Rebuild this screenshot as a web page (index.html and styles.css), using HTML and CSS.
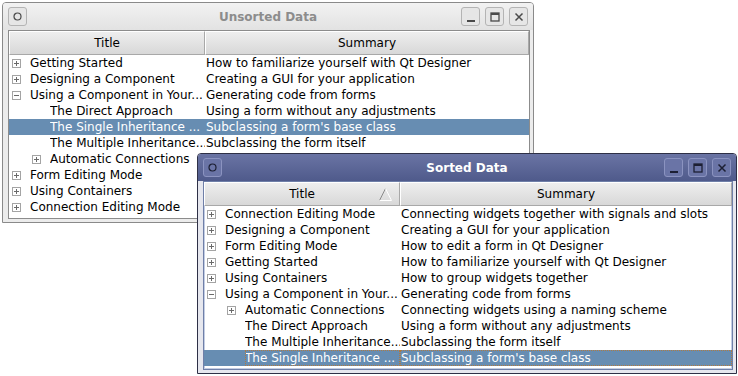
FILE: index.html
```html
<!DOCTYPE html>
<html lang="en">
<head>
<meta charset="UTF-8">
<title>Unsorted and Sorted Data</title>
<link rel="stylesheet" href="styles.css">
</head>
<body>
<div class="desk">

    <div class="window unsorted">
        <div class="titlebar">
            <span class="wbtn"><svg width="9" height="9" viewBox="0 0 9 9"><circle cx="4.5" cy="4.5" r="3.5" fill="none" stroke="currentColor" stroke-width="1.2"/></svg></span>
            <span class="wtitle">Unsorted Data</span>
            <span class="wbtn"><svg width="10" height="10" viewBox="0 0 10 10"><rect x="1" y="8" width="8" height="2" fill="currentColor"/></svg></span>
            <span class="wbtn"><svg width="10" height="10" viewBox="0 0 10 10"><rect x="1" y="1" width="8" height="8" fill="none" stroke="currentColor" stroke-width="1.3"/><rect x="1" y="1" width="8" height="2" fill="currentColor"/></svg></span>
            <span class="wbtn"><svg width="10" height="10" viewBox="0 0 10 10"><path d="M1.5 1.5 L8.5 8.5 M8.5 1.5 L1.5 8.5" stroke="currentColor" stroke-width="1.5"/></svg></span>
        </div>
        <div class="frame">
            <div class="tree">
                <div class="header">
                    <div class="hcell">Title</div>
                    <div class="hcell">Summary</div>
                </div>
                <div class="row"><div class="c1"><span class="exp plus"></span><span class="txt">Getting Started</span></div><div class="c2">How to familiarize yourself with Qt Designer</div></div>
                <div class="row"><div class="c1"><span class="exp plus"></span><span class="txt">Designing a Component</span></div><div class="c2">Creating a GUI for your application</div></div>
                <div class="row"><div class="c1"><span class="exp minus"></span><span class="txt">Using a Component in Your...</span></div><div class="c2">Generating code from forms</div></div>
                <div class="row"><div class="c1 sub"><span class="exp"></span><span class="txt">The Direct Approach</span></div><div class="c2">Using a form without any adjustments</div></div>
                <div class="row sel"><div class="c1 sub"><span class="exp"></span><span class="txt">The Single Inheritance ...</span></div><div class="c2">Subclassing a form's base class</div></div>
                <div class="row"><div class="c1 sub"><span class="exp"></span><span class="txt">The Multiple Inheritance...</span></div><div class="c2">Subclassing the form itself</div></div>
                <div class="row"><div class="c1 sub"><span class="exp plus"></span><span class="txt">Automatic Connections</span></div><div class="c2">Connecting widgets using a naming scheme</div></div>
                <div class="row"><div class="c1"><span class="exp plus"></span><span class="txt">Form Editing Mode</span></div><div class="c2">How to edit a form in Qt Designer</div></div>
                <div class="row"><div class="c1"><span class="exp plus"></span><span class="txt">Using Containers</span></div><div class="c2">How to group widgets together</div></div>
                <div class="row"><div class="c1"><span class="exp plus"></span><span class="txt">Connection Editing Mode</span></div><div class="c2">Connecting widgets together with signals and slots</div></div>
            </div>
        </div>
    </div>

    <div class="window sorted">
        <div class="titlebar">
            <span class="wbtn"><svg width="9" height="9" viewBox="0 0 9 9"><circle cx="4.5" cy="4.5" r="3.5" fill="none" stroke="currentColor" stroke-width="1.2"/></svg></span>
            <span class="wtitle">Sorted Data</span>
            <span class="wbtn"><svg width="10" height="10" viewBox="0 0 10 10"><rect x="1" y="8" width="8" height="2" fill="currentColor"/></svg></span>
            <span class="wbtn"><svg width="10" height="10" viewBox="0 0 10 10"><rect x="1" y="1" width="8" height="8" fill="none" stroke="currentColor" stroke-width="1.3"/><rect x="1" y="1" width="8" height="2" fill="currentColor"/></svg></span>
            <span class="wbtn"><svg width="10" height="10" viewBox="0 0 10 10"><path d="M1.5 1.5 L8.5 8.5 M8.5 1.5 L1.5 8.5" stroke="currentColor" stroke-width="1.5"/></svg></span>
        </div>
        <div class="frame">
            <div class="tree">
                <div class="header">
                    <div class="hcell">Title
                        <svg class="sortmark" width="13" height="13" viewBox="0 0 13 13"><path d="M0.5 12.5 L6.5 0.5" stroke="#8a8a8a" fill="none"/><path d="M6.5 0.5 L12.5 12.5 L0.5 12.5" stroke="#ffffff" fill="none"/></svg>
                    </div>
                    <div class="hcell">Summary</div>
                </div>
                <div class="row"><div class="c1"><span class="exp plus"></span><span class="txt">Connection Editing Mode</span></div><div class="c2">Connecting widgets together with signals and slots</div></div>
                <div class="row"><div class="c1"><span class="exp plus"></span><span class="txt">Designing a Component</span></div><div class="c2">Creating a GUI for your application</div></div>
                <div class="row"><div class="c1"><span class="exp plus"></span><span class="txt">Form Editing Mode</span></div><div class="c2">How to edit a form in Qt Designer</div></div>
                <div class="row"><div class="c1"><span class="exp plus"></span><span class="txt">Getting Started</span></div><div class="c2">How to familiarize yourself with Qt Designer</div></div>
                <div class="row"><div class="c1"><span class="exp plus"></span><span class="txt">Using Containers</span></div><div class="c2">How to group widgets together</div></div>
                <div class="row"><div class="c1"><span class="exp minus"></span><span class="txt">Using a Component in Your...</span></div><div class="c2">Generating code from forms</div></div>
                <div class="row"><div class="c1 sub"><span class="exp plus"></span><span class="txt">Automatic Connections</span></div><div class="c2">Connecting widgets using a naming scheme</div></div>
                <div class="row"><div class="c1 sub"><span class="exp"></span><span class="txt">The Direct Approach</span></div><div class="c2">Using a form without any adjustments</div></div>
                <div class="row"><div class="c1 sub"><span class="exp"></span><span class="txt">The Multiple Inheritance...</span></div><div class="c2">Subclassing the form itself</div></div>
                <div class="row sel focus"><div class="c1 sub"><span class="exp"></span><span class="txt">The Single Inheritance ...</span></div><div class="c2">Subclassing a form's base class</div></div>
            </div>
        </div>
    </div>

</div>
</body>
</html>
```

FILE: styles.css
```css
body {
    margin: 0;
    background: #ffffff;
    font-family: "DejaVu Sans", sans-serif;
    font-size: 12px;
    color: #000000;
}

.desk {
    position: relative;
    width: 738px;
    height: 376px;
}

/* windows sit on the desktop at their own spots */
.window {
    position: absolute;
    box-sizing: border-box;
    display: flex;
    flex-direction: column;
    border: 1px solid #8a8a8a;
    border-radius: 4px 4px 0 0;
    background: #ececec;
}
.unsorted {
    left: 2px;
    top: 2px;
    width: 532px;
    height: 221px;
}
.sorted {
    left: 197px;
    top: 153px;
    width: 540px;
    height: 221px;
    border-color: #2e3046;
    background: #e6e7ee;
}

.titlebar {
    height: 27px;
    display: flex;
    align-items: center;
    gap: 5px;
    padding: 0 5px 0 5px;
    background: linear-gradient(#f2f2f2, #e2e2e2);
    border-radius: 3px 3px 0 0;
}
.wtitle {
    flex: 1;
    text-align: center;
    font-weight: bold;
    color: #8c8c8c;
    padding-left: 48px;
}
.wbtn {
    box-sizing: border-box;
    width: 19px;
    height: 19px;
    display: flex;
    align-items: center;
    justify-content: center;
    border: 1px solid #b4b4b4;
    border-radius: 3px;
    background: #e6e6e6;
    color: #4a4a4a;
}
.sorted .titlebar {
    background: linear-gradient(#6a74a4, #4f5a8b);
}
.sorted .wtitle {
    color: #ffffff;
}
.sorted .wbtn {
    border-color: #8b93c0;
    background: #6a74a6;
    color: #1c1f33;
}

.frame {
    flex: 1;
    display: flex;
    padding: 0 3px 3px 5px;
}

.tree {
    flex: 1;
    box-sizing: border-box;
    border: 1px solid #8c8c8c;
    background: #ffffff;
    overflow: hidden;
}
.sorted .tree {
    border-color: #6f7fa8;
    box-shadow: inset 0 0 0 1px #c3cde3;
}

.header {
    display: grid;
    grid-template-columns: 196px 1fr;
    height: 24px;
}
.hcell {
    position: relative;
    display: flex;
    align-items: center;
    justify-content: center;
    background: linear-gradient(#eeeeee, #d8d8d8);
    border: 1px solid #a8a8a8;
    border-top-color: #ffffff;
    border-left-color: #ffffff;
    box-sizing: border-box;
}
.sortmark {
    position: absolute;
    right: 7px;
    top: 5px;
}

.row {
    display: grid;
    grid-template-columns: 196px 1fr;
    height: 16px;
    line-height: 16px;
    white-space: nowrap;
}
.c1 {
    display: flex;
    align-items: center;
    padding-left: 3px;
    overflow: hidden;
}
.c1.sub {
    padding-left: 23px;
}
.txt {
    overflow: hidden;
    padding-right: 2px;
}
.c2 {
    padding-left: 1px;
    overflow: hidden;
}
.sel {
    background: #678db2;
    color: #ffffff;
}
.focus .txt,
.focus .c2 {
    outline: 1px dotted #b07a40;
    outline-offset: -1px;
}
.focus .txt {
    flex: 1;
}

.exp {
    box-sizing: border-box;
    position: relative;
    width: 9px;
    height: 9px;
    margin-right: 9px;
    flex: none;
}
.exp.plus,
.exp.minus {
    border: 1px solid #a4a4a4;
    background: #ffffff;
}
.exp.plus::before,
.exp.minus::before {
    content: "";
    position: absolute;
    left: 1px;
    top: 3px;
    width: 5px;
    height: 1px;
    background: #6a6a6a;
}
.exp.plus::after {
    content: "";
    position: absolute;
    left: 3px;
    top: 1px;
    width: 1px;
    height: 5px;
    background: #6a6a6a;
}
```
